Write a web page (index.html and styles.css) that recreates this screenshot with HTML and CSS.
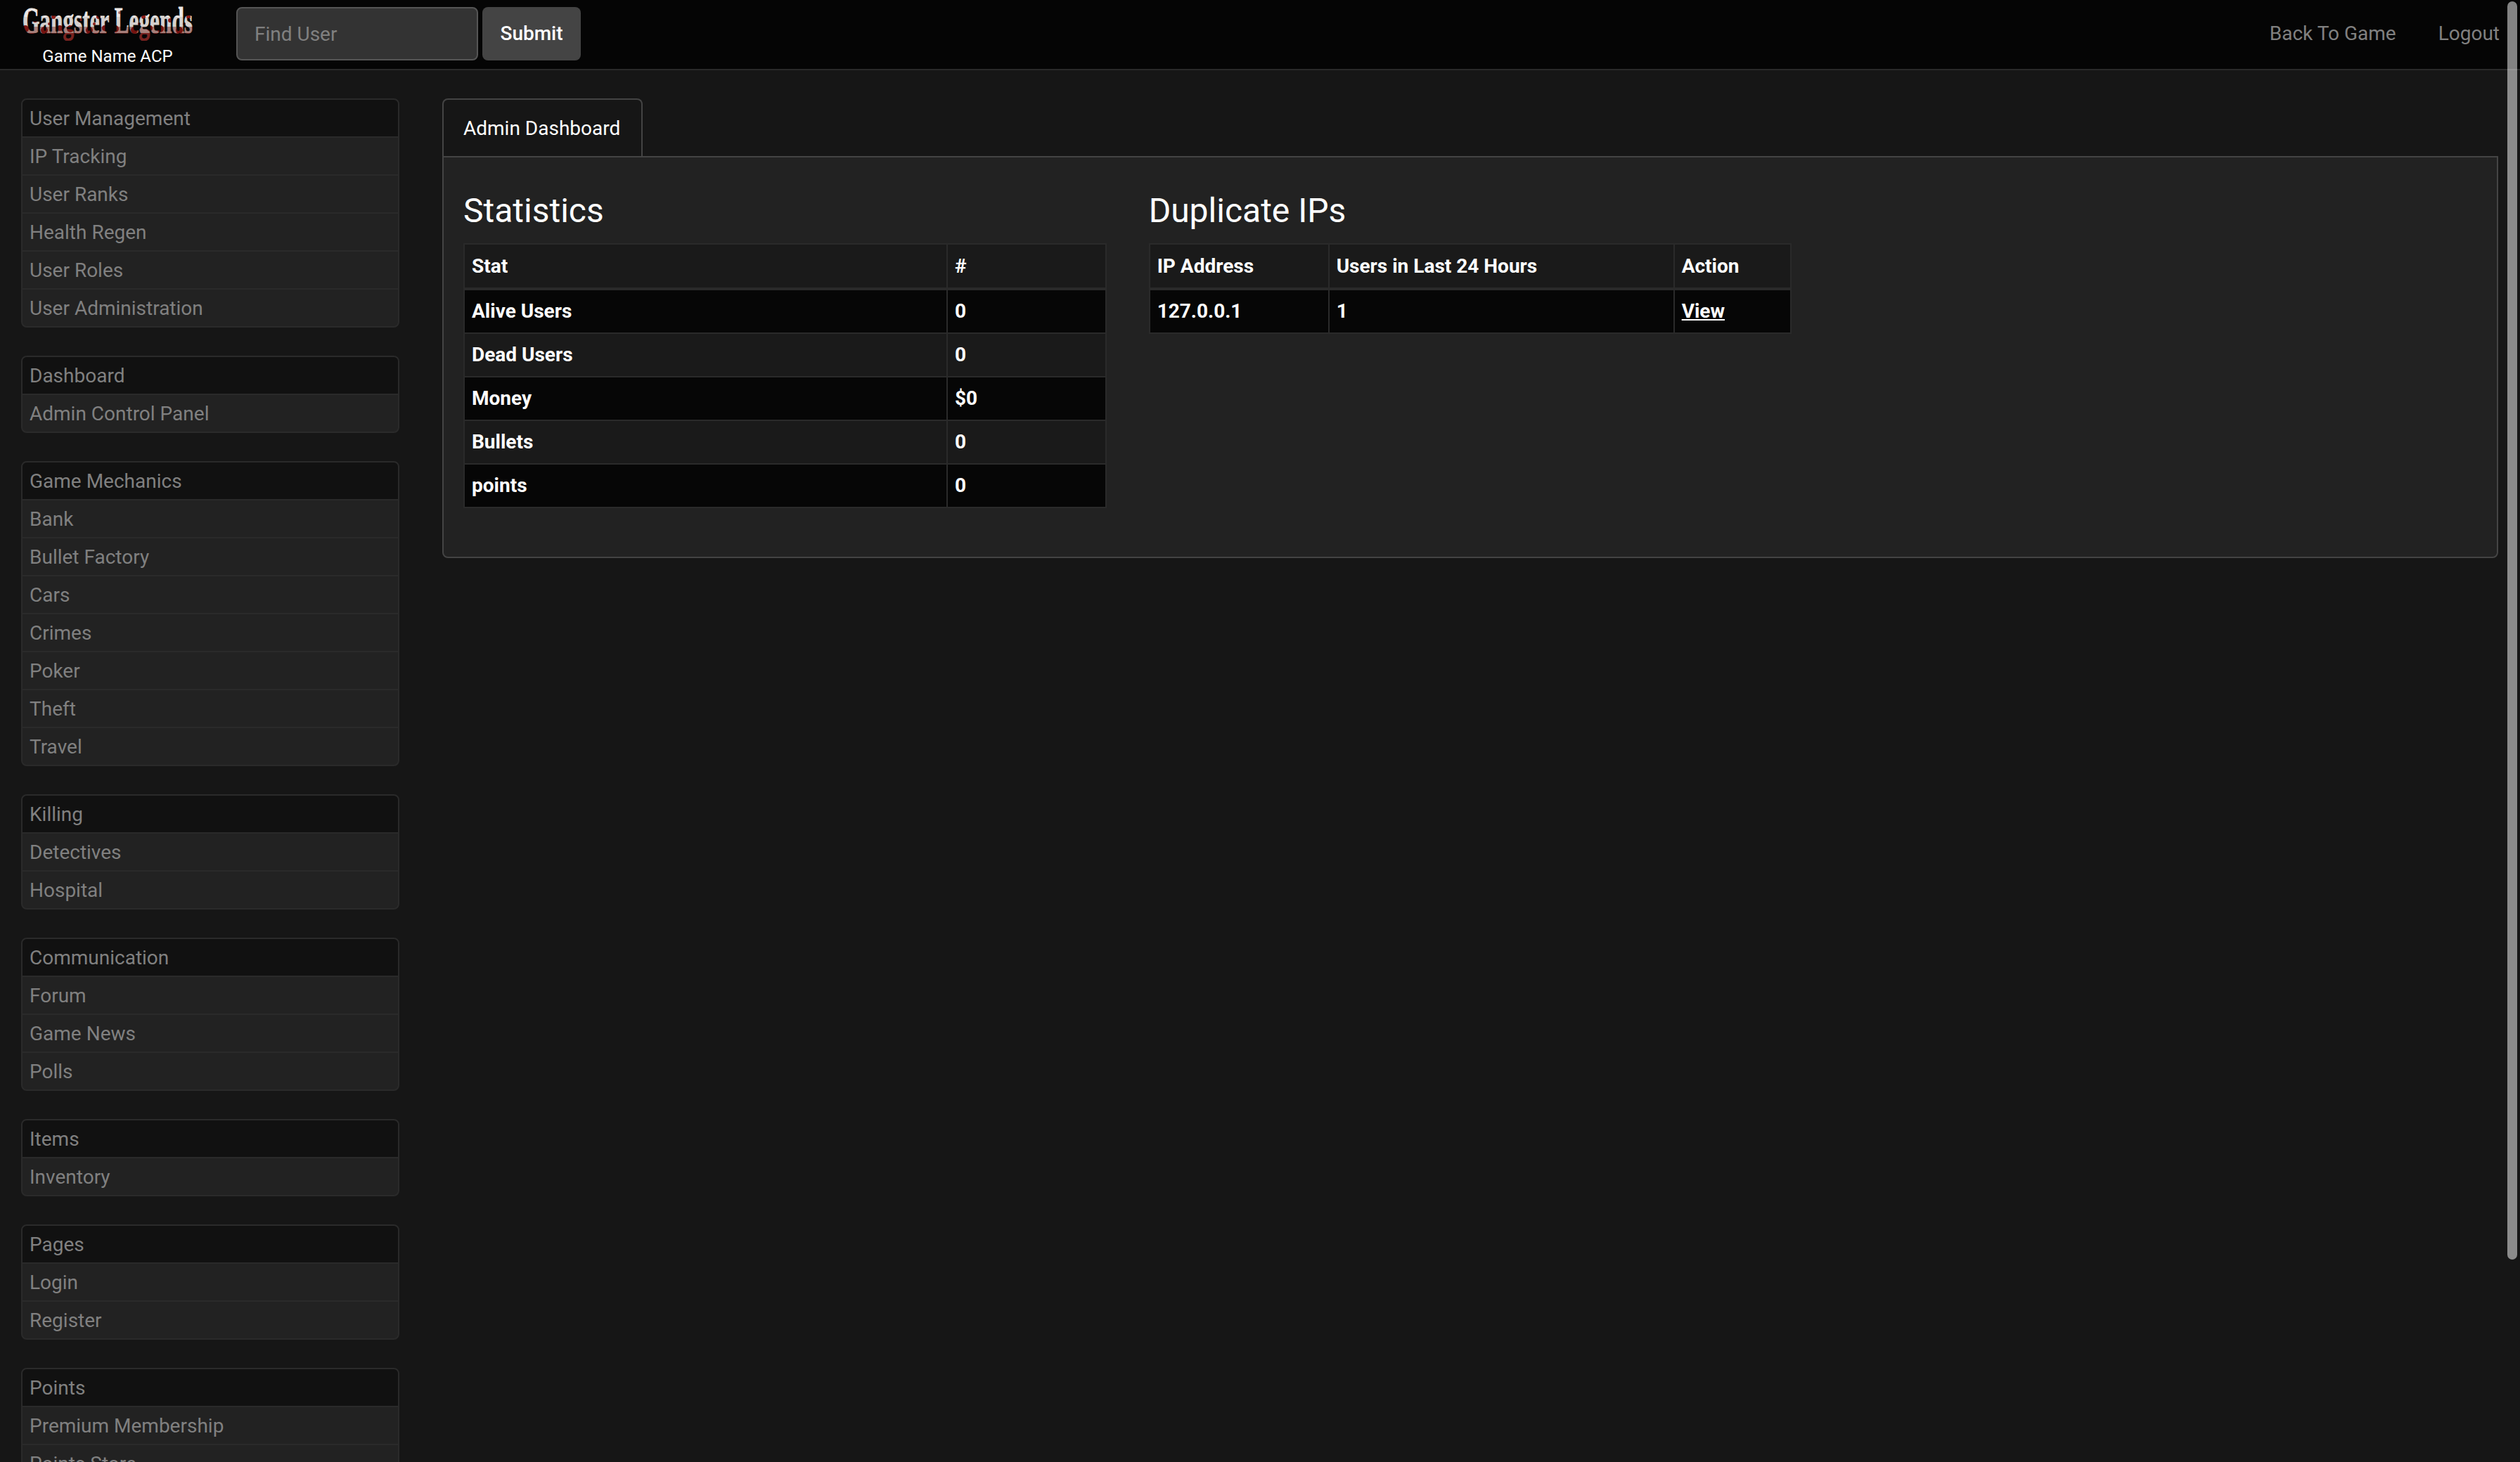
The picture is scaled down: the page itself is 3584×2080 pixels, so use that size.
FILE: index.html
```html
<!DOCTYPE html>
<html lang="en">
<head>
<meta charset="utf-8">
<title>Game Name ACP</title>
<link rel="stylesheet" href="styles.css">
</head>
<body>
<header class="topbar">
  <a class="brand" href="#">
    <svg class="logo" width="250" height="50" viewBox="0 0 250 50" role="img" aria-label="Gangster Legends">
      <defs>
        <pattern id="blood" width="64" height="50" patternUnits="userSpaceOnUse">
          <rect width="64" height="50" fill="#d6d1ce"/>
          <rect y="0" width="64" height="16" fill="#ece8e6"/>
          <rect y="30" width="64" height="20" fill="#a8807b"/>
          <rect y="39" width="64" height="11" fill="#7a2320"/>
          <circle cx="8" cy="33" r="5" fill="#7a1512"/>
          <circle cx="22" cy="21" r="3" fill="#8d1d18"/>
          <circle cx="35" cy="35" r="5" fill="#741310"/>
          <circle cx="48" cy="16" r="3" fill="#8d1d18"/>
          <circle cx="57" cy="32" r="4" fill="#7a1512"/>
          <circle cx="42" cy="26" r="2" fill="#8d1d18"/>
          <circle cx="14" cy="10" r="2" fill="#a8736e"/>
        </pattern>
      </defs>
      <text class="logo-word" x="4" y="39" textLength="242" lengthAdjust="spacingAndGlyphs" fill="url(#blood)" stroke="url(#blood)">Gangster Legends</text>
    </svg>
    <span class="brand-name">Game Name ACP</span>
  </a>
  <form class="search">
    <input class="search-input" type="text" placeholder="Find User">
    <button class="search-btn" type="button">Submit</button>
  </form>
  <nav class="top-links">
    <a href="#">Back To Game</a>
    <a href="#">Logout</a>
  </nav>
</header>

<div class="layout">
  <aside class="sidebar">
    <ul class="group">
      <li class="group-head">User Management</li>
      <li>IP Tracking</li>
      <li>User Ranks</li>
      <li>Health Regen</li>
      <li>User Roles</li>
      <li>User Administration</li>
    </ul>
    <ul class="group">
      <li class="group-head">Dashboard</li>
      <li>Admin Control Panel</li>
    </ul>
    <ul class="group">
      <li class="group-head">Game Mechanics</li>
      <li>Bank</li>
      <li>Bullet Factory</li>
      <li>Cars</li>
      <li>Crimes</li>
      <li>Poker</li>
      <li>Theft</li>
      <li>Travel</li>
    </ul>
    <ul class="group">
      <li class="group-head">Killing</li>
      <li>Detectives</li>
      <li>Hospital</li>
    </ul>
    <ul class="group">
      <li class="group-head">Communication</li>
      <li>Forum</li>
      <li>Game News</li>
      <li>Polls</li>
    </ul>
    <ul class="group">
      <li class="group-head">Items</li>
      <li>Inventory</li>
    </ul>
    <ul class="group">
      <li class="group-head">Pages</li>
      <li>Login</li>
      <li>Register</li>
    </ul>
    <ul class="group">
      <li class="group-head">Points</li>
      <li>Premium Membership</li>
      <li>Points Store</li>
    </ul>
  </aside>

  <main class="main">
    <div class="tabs"><a class="tab" href="#">Admin Dashboard</a></div>
    <section class="panel">
      <div class="panel-grid">
        <div>
          <h3 class="panel-title">Statistics</h3>
          <table class="data">
            <colgroup><col class="stat-a"><col></colgroup>
            <thead><tr><th>Stat</th><th>#</th></tr></thead>
            <tbody>
              <tr><td>Alive Users</td><td>0</td></tr>
              <tr><td>Dead Users</td><td>0</td></tr>
              <tr><td>Money</td><td>$0</td></tr>
              <tr><td>Bullets</td><td>0</td></tr>
              <tr><td>points</td><td>0</td></tr>
            </tbody>
          </table>
        </div>
        <div>
          <h3 class="panel-title">Duplicate IPs</h3>
          <table class="data">
            <colgroup><col class="dup-a"><col class="dup-b"><col></colgroup>
            <thead><tr><th>IP Address</th><th>Users in Last 24 Hours</th><th>Action</th></tr></thead>
            <tbody>
              <tr><td>127.0.0.1</td><td>1</td><td><a href="#">View</a></td></tr>
            </tbody>
          </table>
        </div>
      </div>
    </section>
  </main>
</div>
<div class="scroll-thumb"></div>
</body>
</html>
```

FILE: styles.css
```css
* { box-sizing: border-box; }

html, body {
  margin: 0;
  height: 2080px;
  overflow: hidden;
}

body {
  background: #161616;
  color: #fff;
  font-family: Roboto, "Liberation Sans", sans-serif;
  font-size: 28px;
  line-height: 42px;
}

a { color: inherit; text-decoration: none; }

.topbar {
  display: flex;
  align-items: center;
  height: 100px;
  padding: 0 29px 2px 32px;
  background: #050505;
  border-bottom: 2px solid #2a2a2a;
}

.brand {
  display: flex;
  flex-direction: column;
  align-items: center;
  width: 242px;
  height: 98px;
}

.logo {
  display: block;
  flex: none;
  margin-top: 9px;
  margin-left: -4px;
  margin-right: -4px;
}

.logo-word {
  font-family: "Liberation Serif", serif;
  font-weight: 700;
  font-size: 52px;
  stroke-width: 1px;
}

.brand-name {
  font-size: 24px;
  line-height: 30px;
  margin-top: 7px;
  color: #fff;
}

.search {
  display: flex;
  gap: 6px;
  margin-left: 62px;
}

.search-input {
  width: 344px;
  height: 76px;
  padding: 0 24px;
  background: #333;
  border: 2px solid #555;
  border-radius: 8px;
  color: #fff;
  font: inherit;
  outline: none;
}

.search-input::placeholder { color: #808080; opacity: 1; }

.search-btn {
  width: 140px;
  height: 76px;
  padding: 0;
  background: #444;
  border: 0;
  border-radius: 8px;
  color: #fff;
  font: 500 28px/42px Roboto, "Liberation Sans", sans-serif;
}

.top-links {
  display: flex;
  gap: 60px;
  margin-left: auto;
  color: #808080;
}

.layout {
  display: flex;
  align-items: flex-start;
  padding: 40px 31px 0 30px;
  gap: 61px;
}

.sidebar {
  flex: none;
  width: 538px;
}

.group {
  list-style: none;
  margin: 0 0 40px;
  padding: 0;
  background: #222;
  border: 2px solid #2a2a2a;
  border-radius: 8px;
  overflow: hidden;
  color: #808080;
}

.group li {
  height: 54px;
  padding: 5px 10px 0;
  line-height: 44px;
  border-top: 2px solid #2a2a2a;
}

.group li.group-head {
  height: 52px;
  padding-top: 5px;
  background: #111;
  border-top: 0;
}

.main {
  flex: 1;
  min-width: 0;
}

.tabs { display: flex; }

.tab {
  display: block;
  height: 82px;
  padding: 20px 30px 0 28px;
  border: 2px solid #444;
  border-bottom: 0;
  border-radius: 8px 8px 0 0;
  background: #161616;
  line-height: 42px;
}

.panel {
  height: 572px;
  padding: 28px;
  background: #222;
  border: 2px solid #444;
  border-radius: 0 0 8px 8px;
}

.panel-grid {
  display: grid;
  grid-template-columns: repeat(3, 1fr);
  gap: 60px;
}

.panel-title {
  margin: 19px 0 17px;
  font-size: 48px;
  font-weight: 400;
  line-height: 58px;
}

.data {
  width: 100%;
  table-layout: fixed;
  border-collapse: collapse;
  background: #1a1a1a;
  font-weight: 700;
}

.stat-a { width: 687px; }
.dup-a { width: 255px; }
.dup-b { width: 491px; }

.data th, .data td {
  height: 62px;
  padding: 9px 10px;
  text-align: left;
  border: 2px solid #2a2a2a;
  line-height: 42px;
}

.data thead th {
  height: 64px;
  border-bottom-width: 4px;
  background: #1a1a1a;
}

.data tbody tr:nth-child(odd) td { background: #060606; }
.data tbody tr:nth-child(even) td { background: #1a1a1a; }

.data a { text-decoration: underline; }

.scroll-thumb {
  position: fixed;
  top: 2px;
  right: 4px;
  width: 14px;
  height: 1790px;
  border-radius: 7px;
  background: rgba(255, 255, 255, .5);
}
```
